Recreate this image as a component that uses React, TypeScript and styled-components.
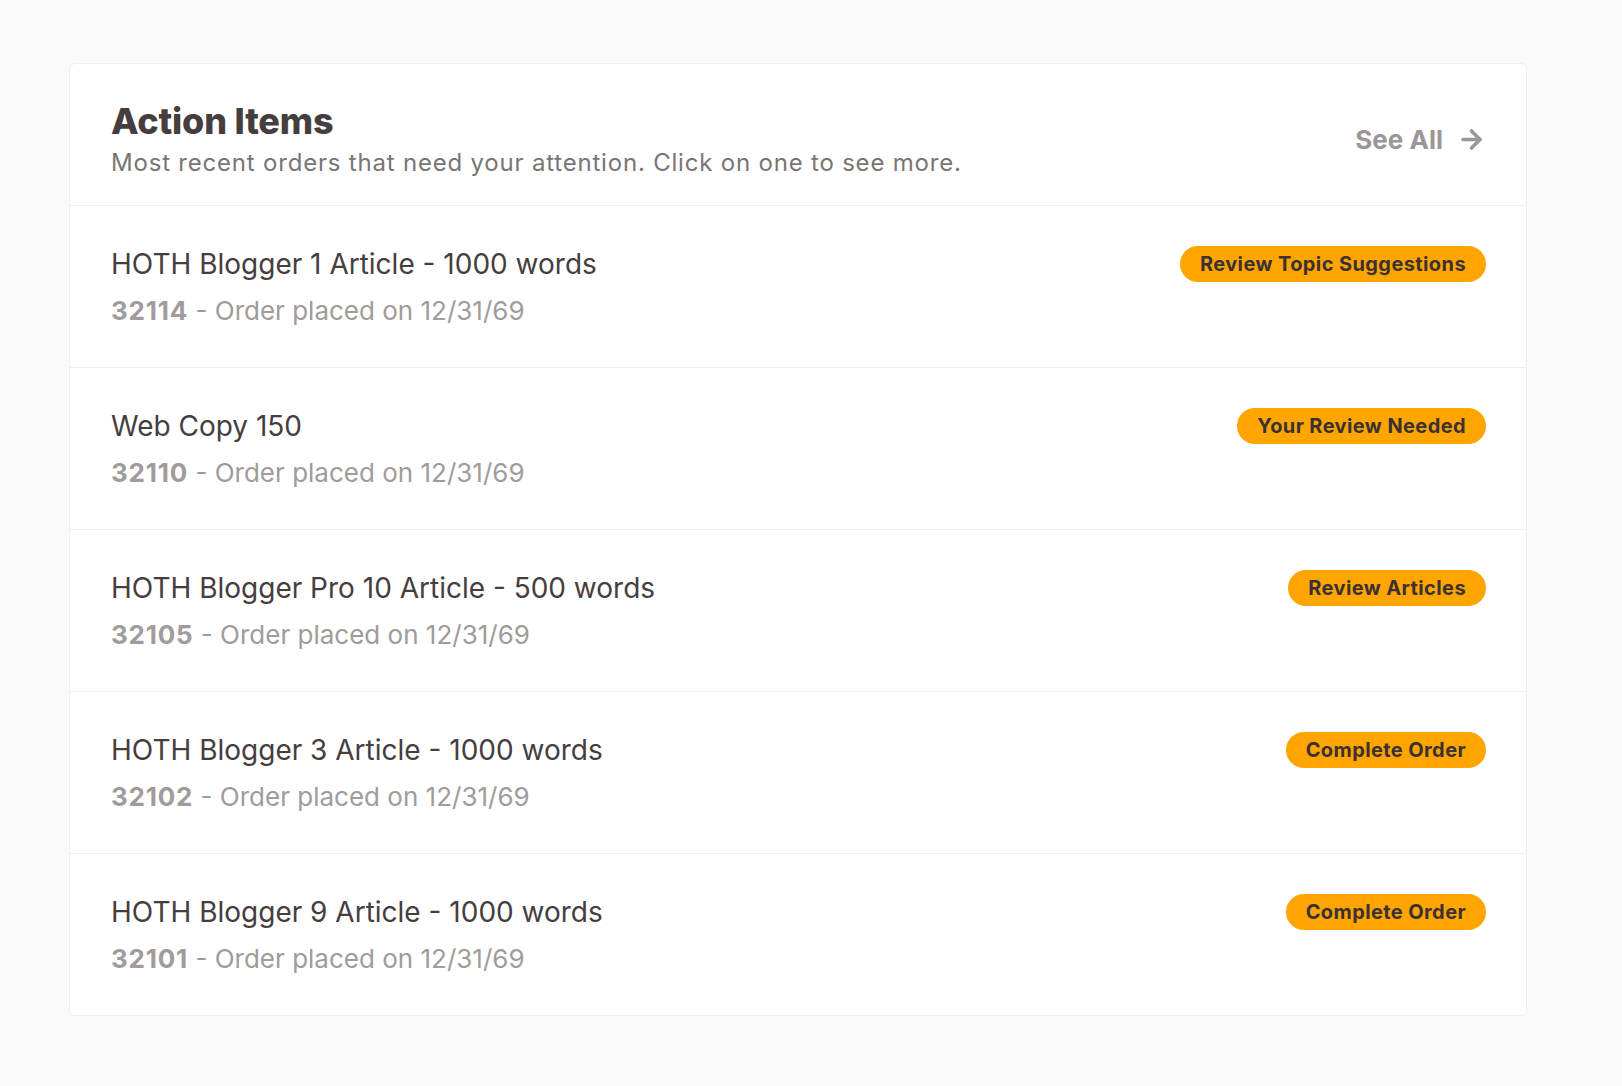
import styled, { createGlobalStyle } from 'styled-components';
import { ArrowRight } from 'lucide-react';

const GlobalStyle = createGlobalStyle`
  html, body {
    margin: 0;
    padding: 0;
    background: #fafafa;
    font-family: Inter, "Noto Sans", "Liberation Sans", sans-serif;
  }
  * { box-sizing: border-box; }
`;

const Page = styled.div`
  min-height: 1086px;
  padding: 63px 95px 40px 69px;
`;

const Card = styled.section`
  background: #ffffff;
  border: 1px solid #f2eeeb;
  border-radius: 6px;
`;

const Header = styled.header`
  display: flex;
  align-items: center;
  justify-content: space-between;
  padding: 36px 40px 26px 41px;
  border-bottom: 1px solid #f2eeeb;
`;

const Title = styled.h1`
  margin: 0;
  font-size: 36px;
  line-height: 43px;
  font-weight: 800;
  color: #463e3e;
  letter-spacing: -0.2px;
`;

const Subtitle = styled.p`
  margin: 4px 0 0;
  font-size: 24px;
  line-height: 32px;
  letter-spacing: 0.8px;
  color: #7b7474;
`;

const SeeAll = styled.a`
  display: flex;
  align-items: center;
  gap: 14px;
  font-size: 26px;
  font-weight: 700;
  color: #9c9696;
  text-decoration: none;
  cursor: pointer;
`;

const Row = styled.div`
  padding: 40px 40px 41px 41px;
  border-bottom: 1px solid #f2eeeb;
  cursor: pointer;

  &:last-child {
    border-bottom: none;
  }
`;

const TopLine = styled.div`
  display: flex;
  align-items: center;
  justify-content: space-between;
  height: 36px;
`;

const OrderName = styled.div`
  font-size: 28px;
  line-height: 34px;
  color: #463e3e;
`;

const Meta = styled.div`
  margin-top: 13px;
  font-size: 26px;
  line-height: 31px;
  color: #a19b9b;

  b {
    font-weight: 700;
    letter-spacing: 0.8px;
  }
`;

const Badge = styled.span`
  display: inline-flex;
  align-items: center;
  height: 36px;
  padding: 0 20px;
  border-radius: 18px;
  background: #ffa500;
  color: #3b3131;
  font-size: 20px;
  font-weight: 700;
  letter-spacing: 0.4px;
  white-space: nowrap;
`;

const orders = [
  { name: 'HOTH Blogger 1 Article - 1000 words', id: '32114', action: 'Review Topic Suggestions' },
  { name: 'Web Copy 150', id: '32110', action: 'Your Review Needed' },
  { name: 'HOTH Blogger Pro 10 Article - 500 words', id: '32105', action: 'Review Articles' },
  { name: 'HOTH Blogger 3 Article - 1000 words', id: '32102', action: 'Complete Order' },
  { name: 'HOTH Blogger 9 Article - 1000 words', id: '32101', action: 'Complete Order' },
];

const App = () => {
  return (
    <>
      <GlobalStyle />
      <Page>
        <Card>
          <Header>
            <div>
              <Title>Action Items</Title>
              <Subtitle>Most recent orders that need your attention. Click on one to see more.</Subtitle>
            </div>
            <SeeAll>
              See All
              <ArrowRight size={29} strokeWidth={3} />
            </SeeAll>
          </Header>
          {orders.map((o) => (
            <Row key={o.id}>
              <TopLine>
                <OrderName>{o.name}</OrderName>
                <Badge>{o.action}</Badge>
              </TopLine>
              <Meta>
                <b>{o.id}</b> - Order placed on 12/31/69
              </Meta>
            </Row>
          ))}
        </Card>
      </Page>
    </>
  );
};

export default App;
